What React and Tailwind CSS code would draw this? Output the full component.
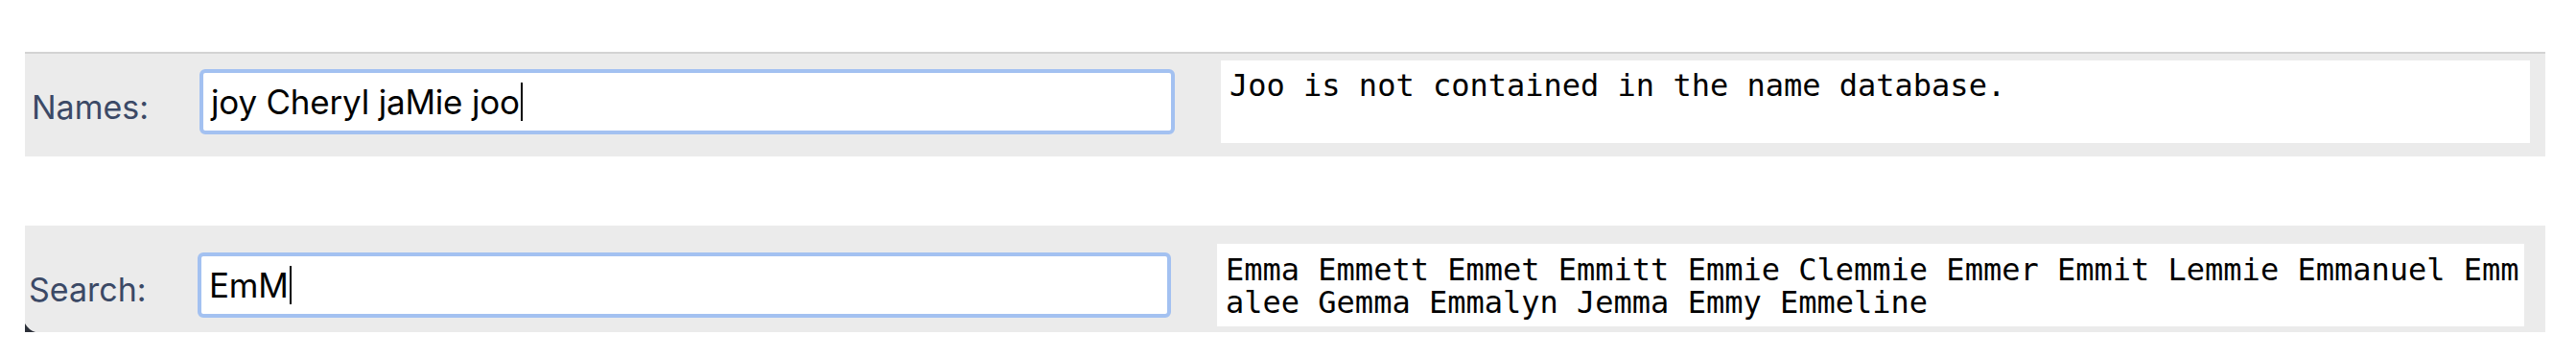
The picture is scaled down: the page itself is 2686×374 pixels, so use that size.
import React from 'react';

const sans = "font-['Inter','Liberation_Sans',Arial,sans-serif]";
const mono = "font-['DejaVu_Sans_Mono','Liberation_Mono',monospace]";

function FieldBox({ value, width }) {
  return (
    <div className={`flex h-[68px] shrink-0 items-center rounded-[6px] border-[4px] border-[#a3c1f1] bg-white pl-[8px] ${width}`}>
      <span className={`${sans} text-[35px] leading-none tracking-[-0.2px] text-black whitespace-pre`}>{value}</span>
      <span className="ml-[1px] h-[40px] w-[2px] bg-black" />
    </div>
  );
}

function OutputBox({ text, width, pad }) {
  return (
    <div className={`h-[86px] shrink-0 overflow-hidden bg-white pr-[4px] ${pad} ${width}`}>
      <p className={`${mono} break-all text-[32px] leading-[34px] text-black`}>{text}</p>
    </div>
  );
}

export default function App() {
  return (
    <div className="min-h-[374px] w-[2686px] bg-white pt-[54px]">
      <div className="ml-[26px] flex w-[2628px] items-center border-t-2 border-[#d3d3d3] bg-[#ebebeb] pb-[14px] pl-[7px] pt-[7px]">
        <div className={`${sans} mt-[10px] w-[175px] shrink-0 text-[34px] text-[#3b4966]`}>Names:</div>
        <FieldBox value="joy Cheryl jaMie joo" width="w-[1017px]" />
        <div className="w-[48px] shrink-0" />
        <OutputBox text="Joo is not contained in the name database." width="w-[1365px]" pad="pl-[9px] pt-[9px]" />
      </div>

      <div className="relative ml-[26px] mt-[72px] flex w-[2628px] items-center bg-[#ebebeb] pb-[6px] pl-[4px] pt-[19px]">
        <div className={`${sans} mt-[8px] w-[176px] shrink-0 text-[34px] text-[#3b4966]`}>Search:</div>
        <FieldBox value="EmM" width="w-[1015px]" />
        <div className="w-[48px] shrink-0" />
        <OutputBox
          text="Emma Emmett Emmet Emmitt Emmie Clemmie Emmer Emmit Lemmie Emmanuel Emmalee Gemma Emmalyn Jemma Emmy Emmeline"
          width="w-[1363px]"
          pad="pl-[9px] pt-[10px]"
        />
        <svg className="absolute bottom-0 left-0" width="11" height="9" viewBox="0 0 11 9">
          <path d="M0 0 Q4 7 11 9 L0 9 Z" fill="#2b2f38" />
        </svg>
      </div>
    </div>
  );
}
